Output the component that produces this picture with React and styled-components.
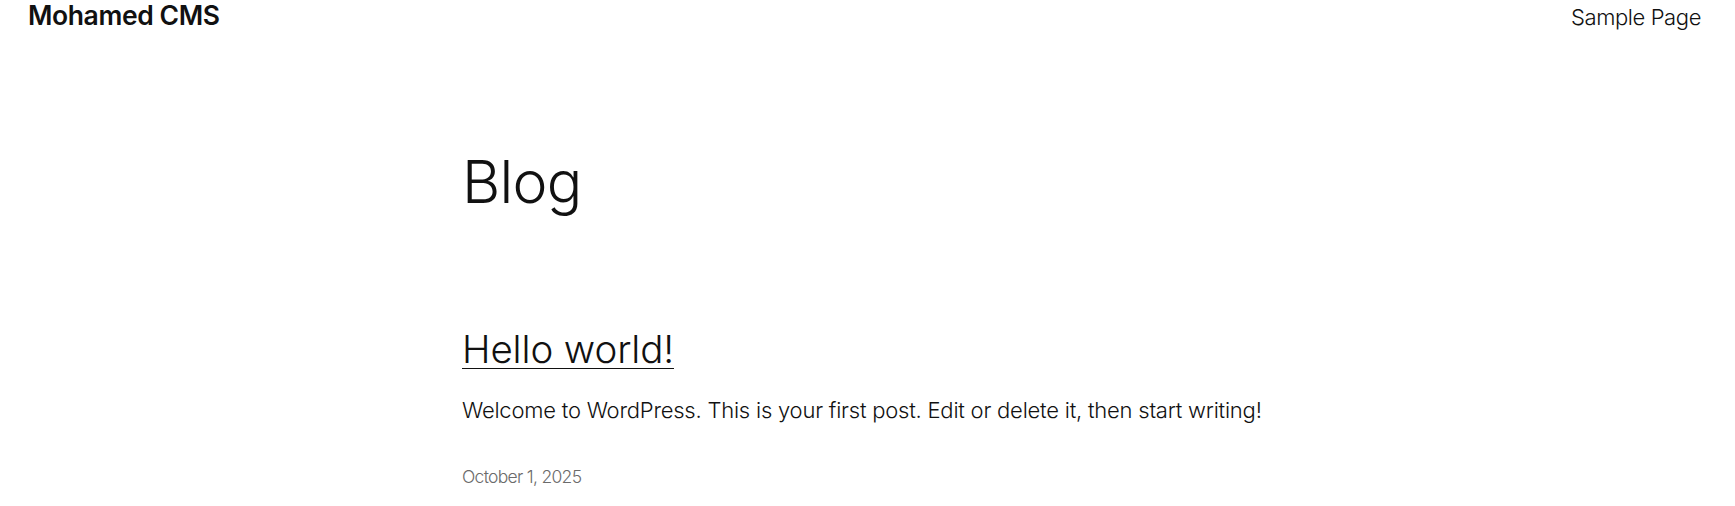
import React from "react";
import styled, { createGlobalStyle } from "styled-components";

const Global = createGlobalStyle`
  html, body { margin: 0; padding: 0; background: #fff; }
  body { font-family: Inter, "Noto Sans", sans-serif; color: #111; }
`;

const Header = styled.header`
  display: flex;
  justify-content: space-between;
  align-items: baseline;
  padding: 0 34px 0 28px;
  height: 30px;
`;

const SiteTitle = styled.a`
  font-size: 26.5px;
  line-height: 30px;
  font-weight: 600;
  letter-spacing: -0.4px;
  color: #111;
  text-decoration: none;
`;

const NavLink = styled.a`
  font-size: 22px;
  line-height: 30px;
  font-weight: 300;
  color: #111;
  text-decoration: none;
  letter-spacing: -0.4px;
`;

const Main = styled.main`
  padding-left: 462px;
  display: flex;
  flex-direction: column;
  align-items: flex-start;
`;

const PageTitle = styled.h1`
  margin: 117px 0 0;
  font-size: 59px;
  line-height: 70px;
  font-weight: 300;
  letter-spacing: -0.8px;
`;

const PostTitle = styled.h2`
  margin: 108px 0 0;
  font-size: 38.5px;
  line-height: 48px;
  font-weight: 300;
  letter-spacing: -0.1px;
  a {
    color: #111;
    text-decoration: underline;
    text-decoration-thickness: 1px;
    text-underline-offset: 5px;
  }
`;

const Excerpt = styled.p`
  margin: 22px 0 0;
  font-size: 22px;
  line-height: 30px;
  font-weight: 300;
  letter-spacing: -0.22px;
`;

const PostDate = styled.time`
  margin-top: 39px;
  font-size: 17.5px;
  line-height: 26px;
  font-weight: 300;
  color: #6b6b6b;
  letter-spacing: -0.7px;
`;

export default function App() {
  return (
    <>
      <Global />
      <Header>
        <SiteTitle href="#">Mohamed CMS</SiteTitle>
        <NavLink href="#">Sample Page</NavLink>
      </Header>
      <Main>
        <PageTitle>Blog</PageTitle>
        <PostTitle>
          <a href="#">Hello world!</a>
        </PostTitle>
        <Excerpt>
          Welcome to WordPress. This is your first post. Edit or delete it, then start writing!
        </Excerpt>
        <PostDate>October 1, 2025</PostDate>
      </Main>
    </>
  );
}
